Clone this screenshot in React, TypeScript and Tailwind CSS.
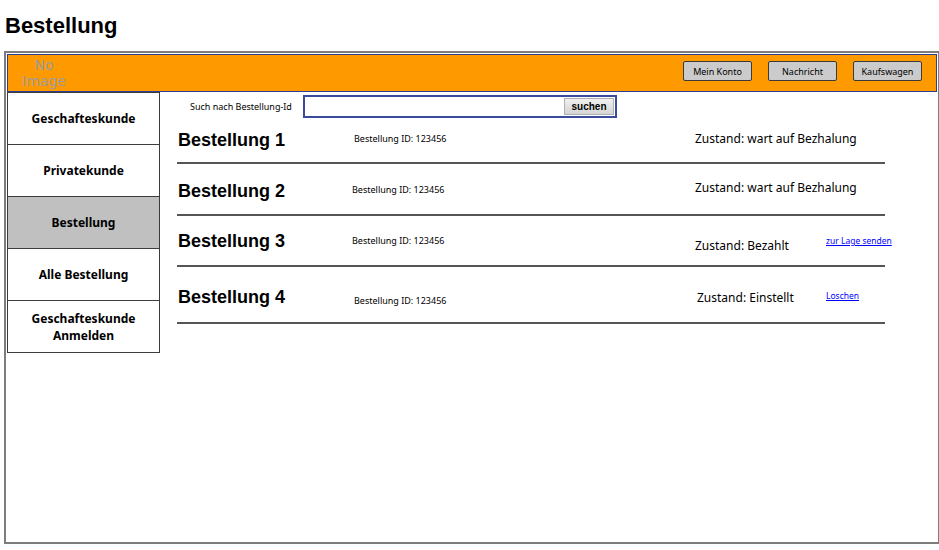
const comic = "font-['Noto_Sans','DejaVu_Sans',sans-serif]";
const arial = "font-['Liberation_Sans','Arial',sans-serif]";

const navItems = [
  { label: "Geschafteskunde", active: false },
  { label: "Privatekunde", active: false },
  { label: "Bestellung", active: true },
  { label: "Alle Bestellung", active: false },
  { label: "Geschafteskunde Anmelden", active: false },
];

// per-row vertical offsets, tuned against the mockup
const orders = [
  { title: "Bestellung 1", h: "h-[45px]", tMt: "mt-[10px]", idMt: "mt-[14px]", idPl: "pl-[2px]", zMt: "mt-[11px]", zPl: "pl-0", status: "wart auf Bezhalung", link: "", lMt: "" },
  { title: "Bestellung 2", h: "h-[52px]", tMt: "mt-[16px]", idMt: "mt-[20px]", idPl: "pl-0", zMt: "mt-[15px]", zPl: "pl-0", status: "wart auf Bezhalung", link: "", lMt: "" },
  { title: "Bestellung 3", h: "h-[51px]", tMt: "mt-[14px]", idMt: "mt-[19px]", idPl: "pl-0", zMt: "mt-[21px]", zPl: "pl-0", status: "Bezahlt", link: "zur Lage senden", lMt: "mt-[19px]" },
  { title: "Bestellung 4", h: "h-[57px]", tMt: "mt-[19px]", idMt: "mt-[28px]", idPl: "pl-[2px]", zMt: "mt-[22px]", zPl: "pl-[2px]", status: "Einstellt", link: "Loschen", lMt: "mt-[23px]" },
];

export default function App() {
  return (
    <div className="w-[939px] h-[550px] bg-white overflow-hidden text-black">
      <h1 className={`${arial} pl-[5px] mt-[12px] h-[28px] leading-[28px] text-[22px] font-bold`}>
        Bestellung
      </h1>

      <div className="mt-[11px] ml-[4px] w-[936px] h-[493px] border-2 border-[#7d7d7d] flex flex-col">
        {/* top bar */}
        <div className="mx-px mt-px h-[38px] bg-[#ff9900] border border-[#2e3d8f] flex items-start justify-between">
          <div className="w-[72px] h-full flex flex-col items-center justify-center leading-[16px] text-[14px] text-[#9c9c9c] font-['DejaVu_Sans',sans-serif]">
            <span>No</span>
            <span>Image</span>
          </div>
          <div className="flex gap-[16px] pt-[6px] pr-[14px]">
            {["Mein Konto", "Nachricht", "Kaufswagen"].map((b) => (
              <button
                key={b}
                className={`${comic} w-[69px] h-[20px] bg-[#cbcbcb] border-[1.5px] border-[#3a3a3a] rounded-[2px] text-[9px] leading-none`}
              >
                {b}
              </button>
            ))}
          </div>
        </div>

        <div className="flex flex-1">
          {/* sidebar */}
          <div className="ml-px w-[153px] flex flex-col">
            {navItems.map((n, i) => (
              <div
                key={n.label}
                className={`${comic} ${i === 0 ? "" : "-mt-px"} h-[53px] border border-[#3c3c3c] flex items-center justify-center text-center text-[12px] font-bold leading-[17px] px-4 ${
                  n.active ? "bg-[#c0c0c0]" : "bg-white"
                }`}
              >
                {n.label}
              </div>
            ))}
          </div>

          {/* content */}
          <div className="flex-1 flex flex-col pt-[3px]">
            <div className="flex items-center h-[23px] ml-[30px]">
              <span className={`${comic} w-[113px] text-[9px]`}>Such nach Bestellung-Id</span>
              <div className="w-[314px] h-[23px] border-2 border-[#3a4a9c] flex items-center justify-end pr-px">
                <div className={`${arial} w-[50px] h-[17px] bg-gradient-to-b from-[#f0f0f0] to-[#d4d4d4] border border-[#b0b0b0] flex items-center justify-center text-[10px] font-bold`}>
                  suchen
                </div>
              </div>
            </div>

            <div className="mt-px ml-[17px] w-[708px] flex flex-col">
              {orders.map((o) => (
                <div key={o.title} className={`${o.h} border-b-2 border-[#555] flex items-start pl-px`}>
                  <div className={`${arial} ${o.tMt} w-[174px] shrink-0 text-[18px] leading-[22px] font-bold`}>
                    {o.title}
                  </div>
                  <div className={`${comic} ${o.idMt} ${o.idPl} w-[343px] shrink-0 text-[9px] leading-[12px]`}>
                    Bestellung ID: 123456
                  </div>
                  <div className={`${comic} ${o.zMt} ${o.zPl} w-[131px] shrink-0 text-[12px] leading-[18px] whitespace-nowrap`}>
                    Zustand: {o.status}
                  </div>
                  {o.link && (
                    <a className={`${comic} ${o.lMt} shrink-0 whitespace-nowrap text-[8.5px] leading-[12px] text-[#0000ff] underline`} href="#">
                      {o.link}
                    </a>
                  )}
                </div>
              ))}
            </div>
          </div>
        </div>
      </div>
    </div>
  );
}
